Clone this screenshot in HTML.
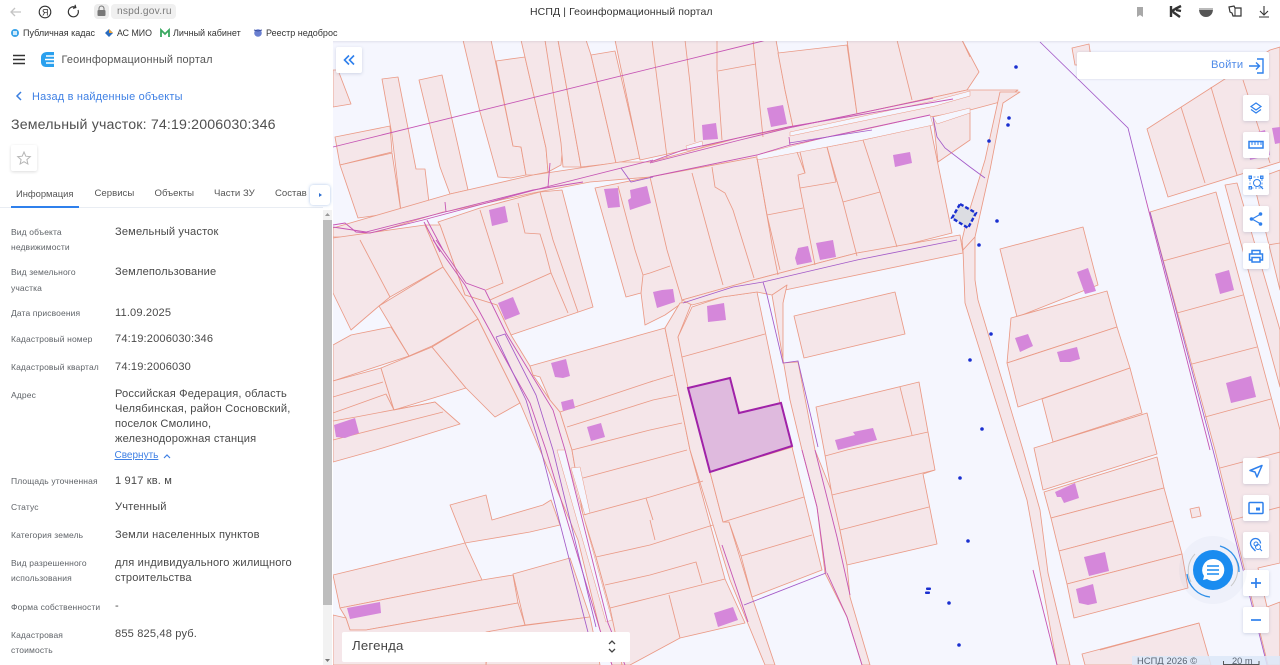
<!DOCTYPE html>
<html lang="ru"><head><meta charset="utf-8"><title>НСПД</title>
<style>
html,body{margin:0;padding:0;width:1280px;height:665px;overflow:hidden;background:#fff;font-family:"Liberation Sans",sans-serif}
body{filter:blur(.3px)}
.t{position:absolute;white-space:nowrap;line-height:14px;color:#4a4a4a}
.l{font-size:8.5px;color:#5f6368;letter-spacing:.12px}
.v{font-size:11.1px;color:#4a4a4a;letter-spacing:.15px;left:115px}
.b{position:absolute;left:1243px;width:26px;height:26px;background:#fff;border-radius:2px;box-shadow:0 1px 3px rgba(90,110,150,.25)}
.b svg{position:absolute;left:0;top:0}
.p polygon{fill:#f5e6e9;stroke:#ea9a86;stroke-width:.85;stroke-linejoin:round}
.n polyline{fill:none;stroke:#ea9a86;stroke-width:.85}
.u polyline{fill:none;stroke:#c655b4;stroke-width:.9}
.u2 polyline{fill:none;stroke:#a35ac8;stroke-width:.85}
.m polygon{fill:#d587da;stroke:none}
.w polygon{fill:#f5f6fe;stroke:#ea9a86;stroke-width:.5}
</style></head><body>

<svg style="position:absolute;left:0;top:0" width="1280" height="665" viewBox="0 0 1280 665">
<rect x="333" y="41" width="947" height="624" fill="#f5f6fe"/>
<g class="p">
<polygon points="333,70 338,70 351,104 333,107"/>
<polygon points="382,79 398,77 416,169 425,169 429,203 401,212 392,135"/>
<polygon points="335,137 390,126 392,152 340,165"/>
<polygon points="340,165 392,153 401,212 358,218"/>
<polygon points="419,80 442,75 468,190 450,194 440,167"/>
<polygon points="463,40 491,40 513,146 521,147 526,175 511,178 498,177 480,112"/>
<polygon points="496,61 525,57 546,148 548,172 533,175 526,175 521,147 513,146"/>
<polygon points="521,40 545,40 563,143 561,165 548,172 546,148"/>
<polygon points="545,40 558,40 581,167 563,167 561,143"/>
<polygon points="558,40 586,40 591,55 616,163 581,167"/>
<polygon points="591,55 615,51 640,158 616,163"/>
<polygon points="615,40 776,40 785,90 793,127 695,148 640,160"/>
<polygon points="778,53 847,45 857,114 793,127 785,90"/>
<polygon points="847,40 962,40 979,72 967,90 857,114"/>
<polygon points="333,228 450,194 533,175 620,162 650,162 738,138 857,114 967,90 1018,90 1000,102 970,110 930,117 827,147 757,157 650,177 590,182 533,193 450,211 443,212 360,237 333,237"/>
<polygon points="438,222 480,208 540,192 562,190 575,240 593,307 511,335 497,305 465,295 440,225"/>
<polygon points="595,188 650,177 757,157 827,147 863,140 930,125 952,233 897,247 857,253 753,280 682,300 682,303 665,315 645,325 641,293 626,297"/>
<polygon points="333,238 425,225 443,267 390,297 379,306 351,330 333,293"/>
<polygon points="379,306 443,267 478,319 432,346 409,356"/>
<polygon points="333,345 351,335 391,327 409,356 333,381"/>
<polygon points="333,381 381,368 394,410 333,413"/>
<polygon points="381,368 432,347 466,388 394,410"/>
<polygon points="432,347 478,319 520,403 495,417 466,388"/>
<polygon points="333,413 386,394 394,410 435,402 460,424 376,450 333,462"/>
<polygon points="425,225 443,267 478,319 520,403 540,450 578,540 600,630 612,665 630,665 610,608 596,557 583,515 572,450 560,412 550,400 533,375 530,366 511,335 497,305 465,295 440,225"/>
<polygon points="530,366 665,328 690,450 725,579 745,623 680,638 630,665 622,665 610,608 596,557 583,515 572,450 560,412 550,400 540,377 533,375"/>
<polygon points="450,505 486,495 492,520 543,505 551,500 560,525 530,532 465,543"/>
<polygon points="333,575 465,543 482,580 340,608"/>
<polygon points="340,608 482,580 513,575 518,603 366,630 350,630 346,618"/>
<polygon points="513,574 570,558 590,617 525,625"/>
<polygon points="490,630 590,617 600,665 486,665"/>
<polygon points="333,615 346,618 350,630 366,630 518,603 525,625 486,632 486,665 333,665"/>
<polygon points="665,328 680,303 692,302 678,337 710,472 723,522 729,522 752,597 775,665 765,665 730,580 690,450"/>
<polygon points="678,337 692,307 722,297 757,292 780,403 792,447 822,570 752,597 741,556 729,522 723,522 710,472 688,388"/>
<polygon points="682,300 753,280 857,253 960,235 963,253 785,290 772,295 757,292 722,297 692,305"/>
<polygon points="772,295 787,285 783,303 783,363 798,362 815,450 833,495 847,565 850,597 870,665 862,665 847,617 825,573 817,507 802,450 790,400"/>
<polygon points="794,316 895,292 905,334 804,358"/>
<polygon points="816,407 919,382 928,432 935,470 923,474 937,544 847,565 840,530 832,495 825,455"/>
<polygon points="933,117 970,112 970,140 938,162"/>
<polygon points="963,250 975,237 990,170 1003,103 1020,92 1000,92 985,160 968,215 962,240"/>
<polygon points="963,250 975,237 975,280 978,300 1023,450 1040,510 1048,573 1070,665 1057,665 1027,500 1008,440 965,303"/>
<polygon points="1000,249 1083,227 1098,285 1017,317"/>
<polygon points="1011,318 1107,291 1117,327 1007,363"/>
<polygon points="1007,363 1117,327 1130,368 1018,407"/>
<polygon points="1042,399 1130,368 1142,413 1053,442"/>
<polygon points="1034,448 1147,413 1157,454 1043,490"/>
<polygon points="1044,492 1157,457 1164,488 1051,518"/>
<polygon points="1051,518 1164,488 1173,521 1059,551"/>
<polygon points="1059,551 1173,521 1182,554 1067,584"/>
<polygon points="1067,584 1182,554 1188,588 1074,618"/>
<polygon points="1082,654 1199,623 1211,665 1085,665"/>
<polygon points="1190,509 1199,507 1201,516 1192,518"/>
<polygon points="1072,48 1089,44 1092,65 1075,65"/>
<polygon points="1147,129 1270,50 1280,47 1280,162 1168,197"/>
<polygon points="1150,212 1216,192 1280,430 1280,563 1258,568 1267,607 1280,602 1280,665 1268,665 1215,450"/>
<polygon points="1225,185 1237,183 1280,330 1280,387"/>
<polygon points="1253,180 1280,170 1280,290"/>
</g>
<g class="w">
<polygon points="686,146 702,141 703,147 687,151"/>
<polygon points="757,155 827,137 863,130 930,115 933,125 863,140 827,147 757,160"/>
<polygon points="933,117 970,108 970,113 937,124"/>
<polygon points="790,132 933,101 970,91 970,96 935,106 790,136"/>
<polygon points="571,468 580,467 590,513 585,515"/>
<polygon points="557,450 565,450 612,620 606,622"/>
</g>
<g class="n">
<polyline points="652,40 667,157"/><polyline points="685,40 690,83 695,142"/><polyline points="717,40 717,70 722,140"/><polyline points="753,40 763,137"/>
<polyline points="718,71 756,64"/><polyline points="897,40 912,100"/><polyline points="962,40 970,57"/>
<polyline points="843,202 880,192"/><polyline points="863,140 880,192 897,247"/><polyline points="827,147 843,202 857,256"/>
<polyline points="800,152 805,173 798,175 800,188 815,265"/><polyline points="800,188 836,182"/><polyline points="827,147 836,182"/>
<polyline points="757,158 767,215 780,270"/><polyline points="767,215 803,208"/><polyline points="797,152 805,173"/>
<polyline points="712,167 715,187 725,193 733,210 754,278"/><polyline points="757,158 773,250 778,275"/>
<polyline points="692,173 713,250 723,285"/><polyline points="650,177 667,250 682,300"/><polyline points="618,186 635,250 643,275 641,293"/>
<polyline points="650,273 670,266"/><polyline points="643,275 650,273"/>
<polyline points="540,192 553,240 578,312"/><polyline points="518,203 525,233 540,234 545,250 551,273"/><polyline points="480,210 503,283 486,290"/>
<polyline points="490,300 551,273 568,313"/>
<polyline points="682,357 765,334"/>
<polyline points="710,472 793,447"/><polyline points="723,522 804,497"/><polyline points="741,556 812,535"/>
<polyline points="825,456 847,450 928,432"/><polyline points="832,495 935,470"/><polyline points="840,530 929,507"/><polyline points="900,387 912,435"/>
<polyline points="360,240 390,297"/>
<polyline points="333,397 383,382"/><polyline points="356,417 435,402"/><polyline points="333,440 443,412"/><polyline points="333,421 356,417"/>
<polyline points="560,412 653,381"/><polyline points="567,427 653,400 677,395"/><polyline points="572,450 650,430 682,423"/>
<polyline points="650,382 673,375"/><polyline points="583,478 650,460 687,450"/><polyline points="583,515 650,497 703,481"/>
<polyline points="596,557 650,545 713,525"/><polyline points="605,585 650,575 696,562 702,583"/><polyline points="610,608 650,598 725,579"/>
<polyline points="646,498 653,520"/><polyline points="669,595 680,638"/><polyline points="650,520 655,540"/>
<polyline points="1181,107 1205,183"/><polyline points="1211,87 1237,175"/><polyline points="1243,80 1270,163"/>
<polyline points="1163,261 1229,243"/><polyline points="1177,313 1243,295"/><polyline points="1192,364 1257,347"/><polyline points="1205,417 1271,399"/>
<polyline points="1220,468 1280,452"/><polyline points="1232,520 1280,507"/><polyline points="1268,245 1280,243"/>
<polyline points="1100,650 1199,623"/>
</g>
<g class="u">
<polyline points="333,147 653,68 767,40"/>
<polyline points="650,163 740,140 793,127 933,98"/>
<polyline points="650,177 757,155 790,145 930,115"/>
<polyline points="650,162 683,150 788,127 953,99"/>
<polyline points="333,225 345,223 356,232 370,233 423,220 546,187 653,160"/>
<polyline points="333,227 366,232 445,212 533,190 583,182"/>
<polyline points="445,202 446,212"/><polyline points="550,163 548,187"/><polyline points="789,137 790,145"/>
<polyline points="427,220 443,250"/><polyline points="424,222 440,252"/>
<polyline points="433,240 465,285 513,373 530,403 546,450 600,630 612,665"/>
<polyline points="436,240 466,283 485,290 506,333 553,410 565,450 608,623 625,665"/>
<polyline points="722,545 748,622"/><polyline points="802,450 817,507 826,573"/><polyline points="1033,570 1057,665"/>
<polyline points="827,573 847,617 862,665"/><polyline points="815,450 837,537 850,595"/>
<polyline points="1146,200 1210,450"/>
</g>
<g class="u2">
<polyline points="621,168 631,182 653,177"/>
<polyline points="789,143 872,130"/>
<polyline points="496,337 505,334 536,395 553,450 596,627"/>
<polyline points="496,337 513,373 526,400 541,450 590,640"/>
<polyline points="933,117 937,137 945,148 970,167 985,178"/>
<polyline points="763,282 767,295 783,363 798,361 818,447"/>
<polyline points="683,303 733,287 763,282 857,260 957,240"/>
<polyline points="826,573 744,605"/>
<polyline points="1040,42 1128,128 1146,200"/>
<polyline points="1150,212 1213,450 1267,665"/>
</g>
<polygon points="688,388 730,378 739,413 781,403 792,446 710,472" fill="#dfbade" stroke="#a022a8" stroke-width="2"/>
<g class="m">
<polygon points="489,210 505,206 508,222 492,226"/><polygon points="604,189 618,188 620,207 608,208"/>
<polygon points="630,190 647,186 651,203 630,210 628,200 631,198"/><polygon points="767,108 783,105 787,124 771,127"/>
<polygon points="702,125 716,123 718,139 703,140"/><polygon points="893,155 910,152 912,163 895,167"/>
<polygon points="795,258 798,248 808,246 812,262 797,265"/><polygon points="816,243 833,240 836,257 820,260"/>
<polygon points="498,303 513,297 520,314 505,320"/><polygon points="551,363 566,359 570,376 563,378 555,377"/>
<polygon points="561,402 573,399 575,408 563,411"/><polygon points="587,427 601,423 605,437 591,441"/>
<polygon points="334,425 355,418 359,433 345,438 336,437"/><polygon points="653,292 662,290 673,289 675,302 657,308"/>
<polygon points="707,306 724,303 726,320 708,322"/><polygon points="835,440 855,435 853,432 873,428 877,440 838,450"/>
<polygon points="347,608 380,602 381,613 350,619"/><polygon points="714,613 733,607 738,620 718,627"/>
<polygon points="1077,272 1088,268 1096,291 1085,294"/><polygon points="1015,338 1028,334 1033,346 1020,352"/>
<polygon points="1057,352 1077,347 1080,359 1070,362 1060,362"/><polygon points="1215,274 1229,270 1234,290 1220,294"/>
<polygon points="1226,383 1251,376 1256,397 1231,403"/><polygon points="1055,492 1075,483 1079,498 1064,503 1061,497 1057,497"/>
<polygon points="1084,557 1105,552 1109,571 1089,576"/><polygon points="1076,589 1093,584 1097,603 1088,605 1079,603"/>
<polygon points="1272,128 1280,127 1280,143 1275,144"/><polygon points="1247,135 1265,130 1270,155 1250,160"/>
</g>
<polygon points="960,204 976,213 968,228 952,218" fill="#dcdde2" stroke="#1a2fd0" stroke-width="2.400" stroke-dasharray="4 2"/>
<g fill="#1a2fd0">
<circle cx="997" cy="221" r="1.800"/><circle cx="979" cy="245" r="1.800"/><circle cx="991" cy="334" r="1.800"/><circle cx="970" cy="360" r="1.800"/><circle cx="982" cy="429" r="1.800"/><circle cx="960" cy="478" r="1.800"/><circle cx="968" cy="541" r="1.800"/><circle cx="949" cy="603" r="1.800"/><circle cx="959" cy="645" r="1.800"/><circle cx="1016" cy="67" r="1.800"/><circle cx="1009" cy="118" r="1.800"/><circle cx="1008" cy="125" r="1.800"/><circle cx="989" cy="141" r="1.800"/>
<rect x="926" y="587.500" width="5" height="2.500" rx="1"/><rect x="925" y="591.500" width="5" height="2.500" rx="1"/>
</g>
</svg>

<!-- browser chrome -->
<div style="position:absolute;left:0;top:0;width:1280px;height:41px;background:#fff;box-shadow:0 1px 2px rgba(120,130,150,.18)"></div>
<svg style="position:absolute;left:0;top:0" width="340" height="41">
<path d="M21 12H11M15 8l-4 4 4 4" fill="none" stroke="#c4c4c4" stroke-width="1.300"/>
<circle cx="45" cy="12" r="5.800" fill="none" stroke="#333" stroke-width="1.100"/>
<text x="42" y="15.500" font-size="9" fill="#333" font-family="Liberation Sans">Я</text>
<path d="M78 10a5 5 0 1 1-2.500-2.700M75 4.800l.8 2.800-2.800.7" fill="none" stroke="#333" stroke-width="1.200"/>
<rect x="94" y="4" width="15" height="15" rx="4" fill="#ececec"/>
<rect x="97.500" y="10" width="8" height="6" rx="1" fill="#777"/><path d="M99 10V8.500a2.500 2.500 0 0 1 5 0V10" fill="none" stroke="#777"/>
<rect x="111" y="4" width="65" height="15" rx="4" fill="#f0f0f0"/>
<circle cx="15" cy="33" r="4" fill="#3aa3e8"/><rect x="13" y="31" width="4" height="4" fill="#cfeafb"/>
<path d="M109 29l4 4-4 4-4-4z" fill="#2a6cc0"/><path d="M109 29l4 4-4 0z" fill="#e9a33a"/>
<path d="M161 37v-7l4 4 4-4v7" fill="none" stroke="#3aa860" stroke-width="1.800"/>
<circle cx="258" cy="33" r="3.800" fill="#6a7fd0"/><path d="M254 30l4 1 4-1" stroke="#3a4fa0" fill="none"/>
</svg>
<div class="t" style="left:117px;top:5px;font-size:10.200px;color:#7b7b7b;letter-spacing:.2px">nspd.gov.ru</div>
<div class="t" style="left:530px;top:5px;font-size:10.500px;color:#333;letter-spacing:.1px">НСПД | Геоинформационный портал</div>
<div class="t" style="left:23px;top:26px;width:72px;overflow:hidden;font-size:9px;color:#333">Публичная кадаст</div>
<div class="t" style="left:117px;top:26px;font-size:8.800px;color:#333">АС МИО</div>
<div class="t" style="left:173px;top:26px;width:68px;overflow:hidden;font-size:9px;color:#333">Личный кабинет -</div>
<div class="t" style="left:266px;top:26px;width:72px;overflow:hidden;font-size:9px;color:#333">Реестр недоброс</div>
<svg style="position:absolute;left:1130px;top:0" width="150" height="30">
<path d="M7 7h6v10l-3-2-3 2z" fill="#a8a8a8"/>
<path d="M41 6v11M41 12l4-3M45 9l6-3M43 12l7 5M46 10l5 1" fill="none" stroke="#333" stroke-width="2.400"/>
<path d="M69 9h14c0 5-3 8-7 8s-7-3-7-8z" fill="#555"/><rect x="69" y="8" width="14" height="2" fill="#bbb"/>
<path d="M99 7l5-1 1 2h6v8h-8l-1-3-2-1z" fill="none" stroke="#333" stroke-width="1.200"/><path d="M105 8v8" stroke="#333"/>
<path d="M134 6v9M130 11l4 4 4-4M129 17h10" fill="none" stroke="#333" stroke-width="1.100"/>
</svg>

<!-- sidebar -->
<div style="position:absolute;left:0;top:41px;width:333px;height:624px;background:#fff"></div>
<svg style="position:absolute;left:0;top:41px" width="333" height="170">
<path d="M13 14.500h12M13 18.500h12M13 22.500h12" stroke="#333" stroke-width="1.500"/>
<path d="M47 11h7v15h-8c-3 0-5-2-5-5v-5c0-3 3-5 6-5z" fill="#2aa0ee"/>
<path d="M46 15h8M45 18.500h9M46 22h8" stroke="#fff" stroke-width="1.400"/>
<path d="M21 51l-4 4 4 4" fill="none" stroke="#3a7fe0" stroke-width="1.500"/>
</svg>
<div class="t" style="left:61.500px;top:53px;font-size:10.900px;color:#555;letter-spacing:.2px">Геоинформационный портал</div>
<div class="t" style="left:32px;top:90px;font-size:10.950px;color:#3f80e4;letter-spacing:.2px">Назад в найденные объекты</div>
<div class="t" style="left:11px;top:118px;font-size:14.200px;color:#505050;letter-spacing:.15px">Земельный участок: 74:19:2006030:346</div>
<div style="position:absolute;left:11px;top:145px;width:26px;height:26px;background:#fff;box-shadow:0 1px 3px rgba(0,0,0,.14);border-radius:2px"></div>
<svg style="position:absolute;left:11px;top:145px" width="26" height="26"><path d="M13 7l1.800 4.200 4.500.4-3.400 3 1 4.400-3.900-2.300-3.900 2.300 1-4.400-3.400-3 4.500-.4z" fill="none" stroke="#b5b5b5"/></svg>
<div class="t" style="left:16px;top:187px;font-size:9.400px;color:#555">Информация</div>
<div class="t" style="left:94.500px;top:187px;font-size:9.600px;color:#555">Сервисы</div>
<div class="t" style="left:154.500px;top:187px;font-size:9.600px;color:#555">Объекты</div>
<div class="t" style="left:214px;top:187px;font-size:9.600px;color:#555">Части ЗУ</div>
<div class="t" style="left:275px;top:187px;font-size:9.600px;color:#555">Состав</div>
<div style="position:absolute;left:0;top:207px;width:323px;height:1px;background:#e9edf3"></div>
<div style="position:absolute;left:11px;top:206px;width:68px;height:2px;background:#2f80ec"></div>
<div style="position:absolute;left:310px;top:185px;width:20px;height:20px;background:#fff;border-radius:3px;box-shadow:0 0 3px rgba(50,110,200,.4)"></div>
<svg style="position:absolute;left:310px;top:185px" width="20" height="20"><path d="M9 8l3 2-3 2z" fill="#2e6fd0"/></svg>

<div class="t l" style="left:11px;top:225px">Вид объекта</div><div class="t l" style="left:11px;top:240px">недвижимости</div>
<div class="t v" style="top:225px">Земельный участок</div>
<div class="t l" style="left:11px;top:265px">Вид земельного</div><div class="t l" style="left:11px;top:281px">участка</div>
<div class="t v" style="top:265px">Землепользование</div>
<div class="t l" style="left:11px;top:306px">Дата присвоения</div><div class="t v" style="top:306px">11.09.2025</div>
<div class="t l" style="left:11px;top:332px">Кадастровый номер</div><div class="t v" style="top:332px">74:19:2006030:346</div>
<div class="t l" style="left:11px;top:360px">Кадастровый квартал</div><div class="t v" style="top:360px">74:19:2006030</div>
<div class="t l" style="left:11px;top:388px">Адрес</div>
<div class="t v" style="top:387px">Российская Федерация, область</div>
<div class="t v" style="top:402px">Челябинская, район Сосновский,</div>
<div class="t v" style="top:417px">поселок Смолино,</div>
<div class="t v" style="top:432px">железнодорожная станция</div>
<div class="t" style="left:114.500px;top:449px;font-size:10px;color:#3f80e4;text-decoration:underline">Свернуть</div>
<svg style="position:absolute;left:162px;top:452px" width="10" height="8"><path d="M2 6l3-3 3 3" fill="none" stroke="#3f80e4" stroke-width="1.200"/></svg>
<div class="t l" style="left:11px;top:474px">Площадь уточненная</div><div class="t v" style="top:474px">1 917 кв. м</div>
<div class="t l" style="left:11px;top:500px">Статус</div><div class="t v" style="top:500px">Учтенный</div>
<div class="t l" style="left:11px;top:528px">Категория земель</div><div class="t v" style="top:528px">Земли населенных пунктов</div>
<div class="t l" style="left:11px;top:556px">Вид разрешенного</div><div class="t l" style="left:11px;top:571px">использования</div>
<div class="t v" style="top:556px">для индивидуального жилищного</div>
<div class="t v" style="top:571px">строительства</div>
<div class="t l" style="left:11px;top:600px">Форма собственности</div><div class="t v" style="top:599px">-</div>
<div class="t l" style="left:11px;top:628px">Кадастровая</div><div class="t l" style="left:11px;top:643px">стоимость</div>
<div class="t v" style="top:627px">855 825,48 руб.</div>

<div style="position:absolute;left:323px;top:210px;width:9px;height:455px;background:#f2f2f2"></div>
<div style="position:absolute;left:323px;top:220px;width:9px;height:385px;background:#bdbdbd"></div>
<svg style="position:absolute;left:323px;top:210px" width="9" height="9"><path d="M4.500 3l2.500 3H2z" fill="#999"/></svg>
<svg style="position:absolute;left:323px;top:655px" width="9" height="9"><path d="M4.500 7L7 4H2z" fill="#777"/></svg>

<!-- map controls -->
<div style="position:absolute;left:336px;top:47px;width:26px;height:26px;background:#fff;border-radius:2px;box-shadow:0 1px 3px rgba(90,110,150,.25)"></div>
<svg style="position:absolute;left:336px;top:47px" width="26" height="26"><path d="M13 8.500l-4.500 4.500 4.500 4.500M18 8.500l-4.500 4.500 4.500 4.500" fill="none" stroke="#2f80ec" stroke-width="1.600"/></svg>

<div style="position:absolute;left:1077px;top:52px;width:192px;height:27px;background:#fff;border-radius:2px;box-shadow:0 0 2px rgba(90,110,150,.25)"></div>
<div class="t" style="left:1211px;top:58px;font-size:11.200px;color:#4f8be8;letter-spacing:.2px">Войти</div>
<svg style="position:absolute;left:1248px;top:57px" width="18" height="18"><path d="M1 9h10M8 5.500L11.500 9 8 12.500M9 2h6v14H9" fill="none" stroke="#2f80ec" stroke-width="1.400"/></svg>

<div class="b" style="top:95px"><svg width="26" height="26"><path d="M13 8l5 3.500-5 3.500-5-3.500z" fill="none" stroke="#2f80ec" stroke-width="1.200"/><path d="M8 14.500L13 18l5-3.500" fill="none" stroke="#2f80ec" stroke-width="1.200"/></svg></div>
<div class="b" style="top:132px"><svg width="26" height="26"><rect x="6" y="9.500" width="14" height="6.500" fill="none" stroke="#2f80ec" stroke-width="1.500"/><path d="M9 10v3M12 10v3M15 10v3M18 10v3" stroke="#2f80ec"/></svg></div>
<div class="b" style="top:169px"><svg width="26" height="26"><rect x="7" y="8" width="12" height="11" fill="none" stroke="#2f80ec" stroke-width=".8" stroke-dasharray="2 1.500"/><circle cx="14" cy="14" r="3.500" fill="none" stroke="#2f80ec"/><path d="M16.500 16.500L20 20" stroke="#2f80ec" stroke-width="1.200"/><g fill="none" stroke="#2f80ec"><rect x="6" y="7" width="2.500" height="2.500"/><rect x="17.500" y="7" width="2.500" height="2.500"/><rect x="6" y="17.500" width="2.500" height="2.500"/></g></svg></div>
<div class="b" style="top:206px"><svg width="26" height="26"><path d="M17 8.500L9 13l8 4.500" fill="none" stroke="#2f80ec" stroke-width="1.200"/><circle cx="17.500" cy="8" r="1.800" fill="#2f80ec"/><circle cx="8.500" cy="13" r="1.800" fill="#2f80ec"/><circle cx="17.500" cy="18" r="1.800" fill="#2f80ec"/></svg></div>
<div class="b" style="top:243px"><svg width="26" height="26"><path d="M9 11V7.500h8V11M9 17H6.500v-6h13v6H17" fill="none" stroke="#2f80ec" stroke-width="1.500"/><rect x="9" y="14.500" width="8" height="4.500" fill="none" stroke="#2f80ec" stroke-width="1.500"/></svg></div>
<div class="b" style="top:458px"><svg width="26" height="26"><path d="M19 7.500L7 12.500l5 1.500 2 5z" fill="none" stroke="#2f80ec" stroke-width="1.500" stroke-linejoin="round"/></svg></div>
<div class="b" style="top:495px"><svg width="26" height="26"><rect x="6" y="7.500" width="14" height="11" rx="1" fill="none" stroke="#2f80ec" stroke-width="1.500"/><rect x="13" y="12.500" width="4" height="3" fill="#2f80ec"/></svg></div>
<div class="b" style="top:532px"><svg width="26" height="26"><path d="M12.500 19c-3-3-5-5-5-7.500a5 5 0 0 1 10 0" fill="none" stroke="#2f80ec" stroke-width="1.300"/><circle cx="13" cy="12" r="2" fill="none" stroke="#2f80ec"/><circle cx="15" cy="15" r="2.500" fill="none" stroke="#2f80ec"/><path d="M17 17l2 2" stroke="#2f80ec"/></svg></div>
<div class="b" style="top:570px"><svg width="26" height="26"><path d="M13 8v10M8 13h10" stroke="#2f80ec" stroke-width="1.700"/></svg></div>
<div class="b" style="top:607px"><svg width="26" height="26"><path d="M8 13h10" stroke="#2f80ec" stroke-width="1.700"/></svg></div>

<svg style="position:absolute;left:1175px;top:532px" width="76" height="76">
<circle cx="38" cy="38" r="34" fill="rgba(140,160,190,.06)"/>
<path d="M16 50A24 24 0 0 1 20 22M60 26A24 24 0 0 1 56 54" fill="none" stroke="#c9c9c9" stroke-width="1"/>
<path d="M64 40A26 26 0 0 0 45 14" fill="none" stroke="#2f8fe8" stroke-width="1.300"/>
<path d="M12 42A26 26 0 0 0 35 65" fill="none" stroke="#2f8fe8" stroke-width="1.300"/>
<circle cx="38" cy="38" r="20" fill="#1a8cf0"/>
<path d="M38 27a11 11 0 1 1-6 20l-4 1 1-4a11 11 0 0 1 9-17z" fill="#fff"/>
<path d="M32 34h12M32 38h12M32 42h12" stroke="#1a8cf0" stroke-width="1.600"/>
</svg>

<div style="position:absolute;left:342px;top:632px;width:288px;height:30px;background:#fff;border-radius:2px"></div>
<div class="t" style="left:352px;top:639px;font-size:13.200px;color:#444;letter-spacing:.2px">Легенда</div>
<svg style="position:absolute;left:605px;top:639px" width="14" height="16"><path d="M4 5l3-3 3 3M4 10l3 3 3-3" fill="none" stroke="#444" stroke-width="1.300"/></svg>

<div style="position:absolute;left:1132px;top:656px;width:148px;height:9px;background:rgba(220,232,248,.85)"></div>
<div class="t" style="left:1137px;top:654px;font-size:9.300px;color:#5a6472;letter-spacing:.1px">НСПД 2026 ©</div>
<div class="t" style="left:1232px;top:654px;font-size:9.300px;color:#5a6472">20 m</div>
<svg style="position:absolute;left:1220px;top:660px" width="42" height="5"><path d="M3.500 1v4M3.500 4.500H39M39 1v4" fill="none" stroke="#555"/></svg>
</body></html>
